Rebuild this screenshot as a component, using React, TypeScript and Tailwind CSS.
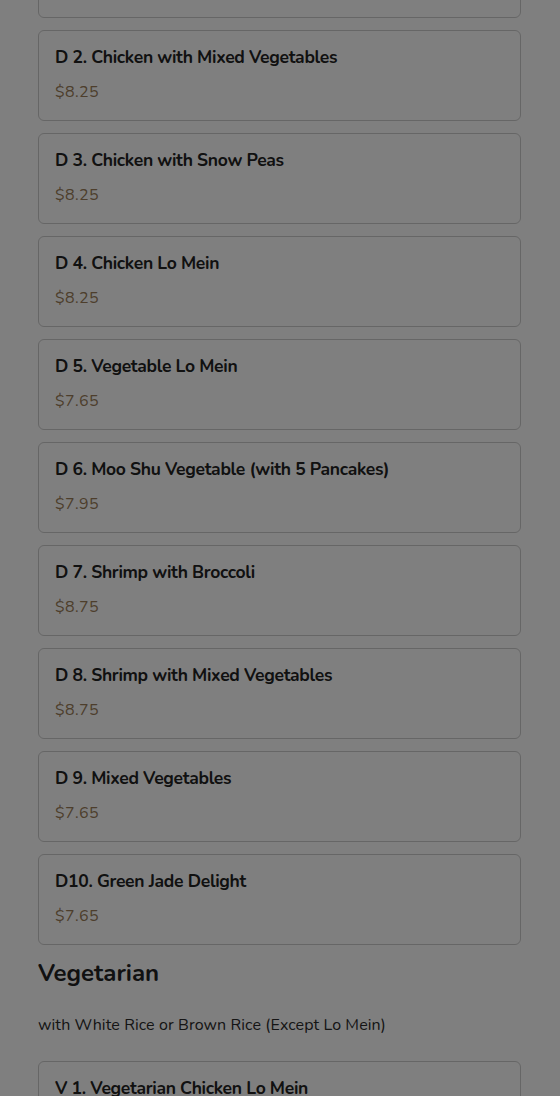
const DINNER = [
  { name: 'D 1. Chicken with Broccoli', price: '$8.25' },
  { name: 'D 2. Chicken with Mixed Vegetables', price: '$8.25' },
  { name: 'D 3. Chicken with Snow Peas', price: '$8.25' },
  { name: 'D 4. Chicken Lo Mein', price: '$8.25' },
  { name: 'D 5. Vegetable Lo Mein', price: '$7.65' },
  { name: 'D 6. Moo Shu Vegetable (with 5 Pancakes)', price: '$7.95' },
  { name: 'D 7. Shrimp with Broccoli', price: '$8.75' },
  { name: 'D 8. Shrimp with Mixed Vegetables', price: '$8.75' },
  { name: 'D 9. Mixed Vegetables', price: '$7.65' },
  { name: 'D10. Green Jade Delight', price: '$7.65' },
];

const VEGETARIAN = [
  { name: 'V 1. Vegetarian Chicken Lo Mein', price: '$8.25' },
  { name: 'V 2. Vegetarian Chicken with Broccoli', price: '$8.25' },
];

function ItemCard({ name, price }: { name: string; price: string }) {
  return (
    <div className="rounded-[6px] border border-[#cccccc] bg-white px-4 pt-[15px] pb-[16px]">
      <p className="text-[17.5px] leading-[22px] font-bold text-[#222222] tracking-[-0.3px]">{name}</p>
      <p className="mt-[12px] text-[16px] leading-[24px] text-[#9a7d58] tracking-[0.4px]">{price}</p>
    </div>
  );
}

export default function App() {
  return (
    <div className="relative h-[1096px] overflow-hidden bg-white font-['Nunito','Lato','Noto_Sans',sans-serif]">
      <div className="mt-[-73px] pl-[38px] pr-[39px]">
        <div className="flex flex-col gap-3">
          {DINNER.map((item) => (
            <ItemCard key={item.name} {...item} />
          ))}
        </div>

        <h2 className="mt-[13px] text-[24px] leading-[30px] font-bold text-[#222222]">Vegetarian</h2>
        <p className="mt-[25px] text-[16px] leading-[24px] text-[#2a2a2a] tracking-[0.1px]">
          with White Rice or Brown Rice (Except Lo Mein)
        </p>

        <div className="mt-[24px] flex flex-col gap-3">
          {VEGETARIAN.map((item) => (
            <ItemCard key={item.name} {...item} />
          ))}
        </div>
      </div>

      <div aria-hidden="true" className="fixed inset-0 bg-black/50" />
    </div>
  );
}
